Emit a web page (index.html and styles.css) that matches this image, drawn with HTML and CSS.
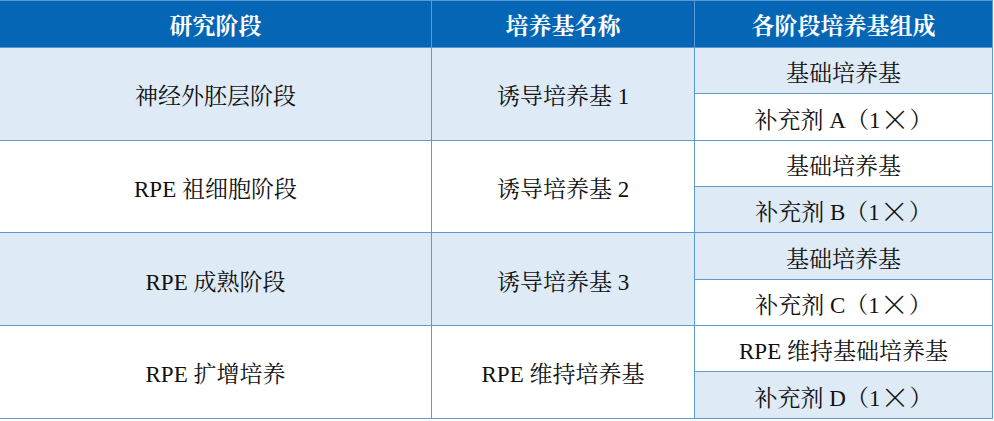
FILE: index.html
```html
<!DOCTYPE html>
<html lang="zh">
<head>
<meta charset="utf-8">
<link rel="stylesheet" href="styles.css">
</head>
<body>
<div class="table">
  <div class="cell head">研究阶段</div>
  <div class="cell head">培养基名称</div>
  <div class="cell head">各阶段培养基组成</div>

  <div class="cell span light">神经外胚层阶段</div>
  <div class="cell span light">诱导培养基 1</div>
  <div class="cell light">基础培养基</div>
  <div class="cell">补充剂 A（1<span class="mul">×</span>）</div>

  <div class="cell span">RPE 祖细胞阶段</div>
  <div class="cell span">诱导培养基 2</div>
  <div class="cell">基础培养基</div>
  <div class="cell light">补充剂 B（1<span class="mul">×</span>）</div>

  <div class="cell span light">RPE 成熟阶段</div>
  <div class="cell span light">诱导培养基 3</div>
  <div class="cell light">基础培养基</div>
  <div class="cell">补充剂 C（1<span class="mul">×</span>）</div>

  <div class="cell span">RPE 扩增培养</div>
  <div class="cell span">RPE 维持培养基</div>
  <div class="cell">RPE 维持基础培养基</div>
  <div class="cell light">补充剂 D（1<span class="mul">×</span>）</div>
</div>
</body>
</html>
```
FILE: styles.css
```css
html, body {
  margin: 0;
  padding: 0;
  background: #ffffff;
}
body {
  width: 994px;
  height: 421px;
  overflow: hidden;
  font-family: "Liberation Serif", "Noto Serif CJK SC", "Noto Sans CJK SC", serif;
  color: #111111;
}
.table {
  display: grid;
  width: 993px;
  grid-template-columns: 431px 262px 297px;
  grid-template-rows: 46px repeat(8, 45.35px);
  gap: 1px;
  background: #5b9bd5;
  padding: 1px 1px 1px 0;
  box-sizing: border-box;
  height: 419px;
}
.cell {
  background: #ffffff;
  display: flex;
  align-items: center;
  justify-content: center;
  font-size: 23px;
  white-space: nowrap;
  padding-top: 2px;
  box-sizing: border-box;
}
.head {
  background: #0566b6;
  color: #ffffff;
  font-weight: bold;
  font-size: 23px;
  padding-top: 0;
}
.span {
  grid-row: span 2;
}
.light {
  background: #deeaf6;
}
.mul {
  font-family: "Noto Sans CJK SC", sans-serif;
  font-weight: 300;
  font-size: 29px;
  line-height: 1;
  vertical-align: 0.1em;
}
```
